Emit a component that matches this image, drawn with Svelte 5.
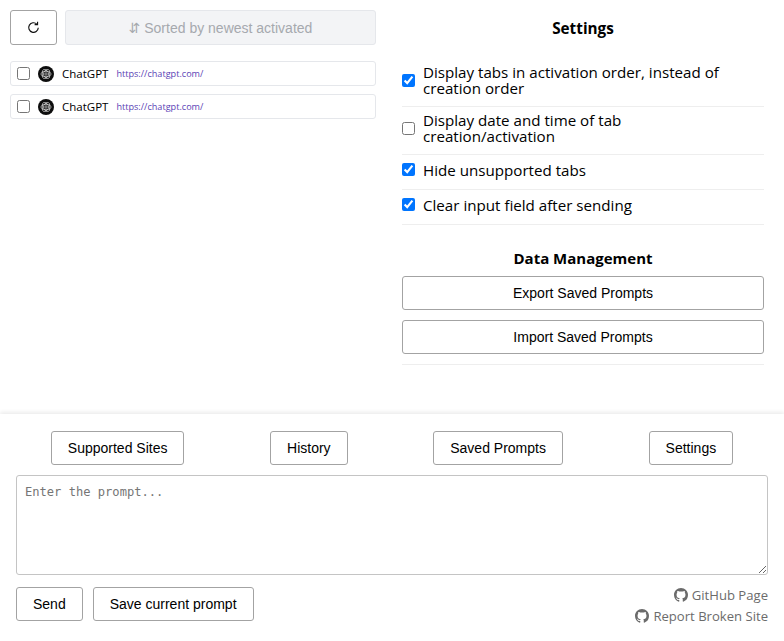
<script>
  const tabs = [
    { title: "ChatGPT", url: "https://chatgpt.com/" },
    { title: "ChatGPT", url: "https://chatgpt.com/" }
  ];
  const settings = [
    { label: "Display tabs in activation order, instead of creation order", checked: true },
    { label: "Display date and time of tab creation/activation", checked: false },
    { label: "Hide unsupported tabs", checked: true },
    { label: "Clear input field after sending", checked: true }
  ];
  const navButtons = ["Supported Sites", "History", "Saved Prompts", "Settings"];
  const githubPath = "M8 0C3.58 0 0 3.58 0 8c0 3.54 2.29 6.53 5.47 7.59.4.07.55-.17.55-.38 0-.19-.01-.82-.01-1.49-2.01.37-2.53-.49-2.69-.94-.09-.23-.48-.94-.82-1.13-.28-.15-.68-.52-.01-.53.63-.01 1.08.58 1.23.82.72 1.21 1.87.87 2.33.66.07-.52.28-.87.51-1.07-1.78-.2-3.64-.89-3.64-3.95 0-.87.31-1.59.82-2.15-.08-.2-.36-1.02.08-2.12 0 0 .67-.21 2.2.82.64-.18 1.32-.27 2-.27s1.36.09 2 .27c1.53-1.04 2.2-.82 2.2-.82.44 1.1.16 1.92.08 2.12.51.56.82 1.27.82 2.15 0 3.07-1.87 3.75-3.65 3.95.29.25.54.73.54 1.48 0 1.07-.01 1.93-.01 2.2 0 .21.15.46.55.38A8.01 8.01 0 0 0 16 8c0-4.42-3.58-8-8-8z";
</script>

<div class="page">
  <div class="top">
    <div class="left">
      <div class="toolbar">
        <button class="btn refresh" aria-label="Refresh">
          <svg width="13" height="13" viewBox="0 0 16 16" fill="none" stroke="#111" stroke-width="1.4">
            <path d="M13.9 8.4a5.9 5.9 0 1 1-1.8-4.6" />
            <path d="M13 0.8v3.6H9.4" />
          </svg>
        </button>
        <button class="sort" disabled><span class="arrows">⇵</span> Sorted by newest activated</button>
      </div>
      <div class="tabs">
        {#each tabs as tab}
          <label class="tab">
            <input type="checkbox" />
            <svg class="logo" width="16" height="16" viewBox="0 0 16 16">
              <circle cx="8" cy="8" r="8" fill="#0d0d0d" />
              <g fill="none" stroke="#d8d8d8" stroke-width="0.7">
                <ellipse cx="8" cy="8" rx="5" ry="2.7" />
                <ellipse cx="8" cy="8" rx="5" ry="2.7" transform="rotate(60 8 8)" />
                <ellipse cx="8" cy="8" rx="5" ry="2.7" transform="rotate(120 8 8)" />
                <circle cx="8" cy="8" r="1.2" />
              </g>
            </svg>
            <span class="title">{tab.title}</span>
            <span class="url">{tab.url}</span>
          </label>
        {/each}
      </div>
    </div>

    <div class="right">
      <h3 class="heading">Settings</h3>
      <div class="settings">
        {#each settings as s}
          <label class="setting">
            <input type="checkbox" checked={s.checked} />
            <span>{s.label}</span>
          </label>
        {/each}
      </div>
      <h3 class="heading data">Data Management</h3>
      <div class="data-actions">
        <button class="btn wide">Export Saved Prompts</button>
        <button class="btn wide">Import Saved Prompts</button>
      </div>
    </div>
  </div>

  <div class="bottom">
    <div class="nav">
      {#each navButtons as b}
        <button class="btn">{b}</button>
      {/each}
    </div>
    <textarea placeholder="Enter the prompt..."></textarea>
    <div class="footer">
      <div class="actions">
        <button class="btn">Send</button>
        <button class="btn">Save current prompt</button>
      </div>
      <div class="links">
        <span class="link">
          <svg width="14" height="14" viewBox="0 0 16 16" fill="#6b6b6b"><path d={githubPath} /></svg>
          GitHub Page
        </span>
        <span class="link">
          <svg width="14" height="14" viewBox="0 0 16 16" fill="#6b6b6b"><path d={githubPath} /></svg>
          Report Broken Site
        </span>
      </div>
    </div>
  </div>
</div>

<style>
  :global(body) {
    margin: 0;
    background: #fff;
    font-family: "Open Sans", "Noto Sans", sans-serif;
    overflow: hidden;
  }

  .page {
    height: 641px;
    display: flex;
    flex-direction: column;
  }

  .top {
    height: 414px;
    display: grid;
    grid-template-columns: 366px 362px;
    column-gap: 26px;
    padding: 10px 20px 0 10px;
    box-sizing: border-box;
  }

  .btn {
    background: #fff;
    border: 1px solid #a3a3a3;
    border-radius: 3px;
    font-family: "Liberation Sans", Arial, sans-serif;
    font-size: 14px;
    color: #000;
    height: 34px;
    padding: 0 16px;
    box-sizing: border-box;
  }

  .toolbar {
    display: flex;
    gap: 8px;
  }

  .refresh {
    width: 47px;
    height: 35px;
    padding: 0;
    display: flex;
    align-items: center;
    justify-content: center;
    flex: none;
  }

  .sort {
    flex: 1;
    height: 35px;
    background: #f3f4f6;
    border: 1px solid #e5e7eb;
    border-radius: 3px;
    color: #a6a9ae;
    font-family: "Liberation Sans", Arial, sans-serif;
    font-size: 14px;
  }

  .arrows {
    font-family: "DejaVu Sans", sans-serif;
  }

  .tabs {
    margin-top: 16px;
    display: flex;
    flex-direction: column;
    gap: 8px;
  }

  .tab {
    height: 25px;
    box-sizing: border-box;
    border: 1px solid #e5e7eb;
    border-radius: 3px;
    display: flex;
    align-items: center;
    padding-left: 6px;
  }

  .tab input {
    margin: 0 8px 0 0;
    width: 13px;
    height: 13px;
  }

  .logo {
    margin-right: 8px;
    flex: none;
  }

  .title {
    font-size: 11.5px;
    color: #000;
    margin-right: 8px;
  }

  .url {
    font-size: 9.1px;
    color: #5b3fb5;
  }

  .heading {
    margin: 0;
    font-size: 15.3px;
    font-weight: 700;
    text-align: center;
    color: #000;
    line-height: 20px;
  }

  .right {
    padding-top: 8px;
  }

  .settings {
    margin-top: 21px;
  }

  .setting {
    display: flex;
    align-items: center;
    gap: 8px;
    padding: 5px 0 10px;
    min-height: 35px;
    border-bottom: 1px solid #eeeeee;
    font-size: 15.15px;
    line-height: 16px;
    color: #000;
    box-sizing: border-box;
  }

  .setting span {
    max-width: 320px;
  }

  .setting input {
    margin: 0;
    width: 13px;
    height: 13px;
    flex: none;
  }

  .data {
    margin-top: 23px;
    font-size: 15px;
  }

  .data-actions {
    margin-top: 8px;
    display: flex;
    flex-direction: column;
    gap: 10px;
    padding-bottom: 10px;
    border-bottom: 1px solid #eeeeee;
  }

  .wide {
    width: 100%;
  }

  .bottom {
    flex: 1;
    box-shadow: 0 -2px 4px rgba(0, 0, 0, 0.08);
    padding: 17px 16px 0;
    background: #fff;
  }

  .nav {
    display: flex;
    justify-content: space-around;
    margin: 0 -8px;
  }

  textarea {
    display: block;
    width: 100%;
    height: 100px;
    box-sizing: border-box;
    margin-top: 10px;
    border: 1px solid #c4c4c4;
    border-radius: 3px;
    padding: 9px 8px;
    font-family: "DejaVu Sans Mono", monospace;
    font-size: 12.1px;
    background: #fff;
  }

  textarea::placeholder {
    color: #757575;
  }

  .footer {
    margin-top: 12px;
    display: flex;
    justify-content: space-between;
  }

  .actions {
    display: flex;
    gap: 10px;
  }

  .links {
    display: flex;
    flex-direction: column;
    align-items: flex-end;
    gap: 1px;
    font-size: 13.1px;
    color: #6b6b6b;
    line-height: 20px;
    margin-top: -2px;
  }

  .link {
    display: flex;
    align-items: center;
    gap: 4px;
  }
</style>
